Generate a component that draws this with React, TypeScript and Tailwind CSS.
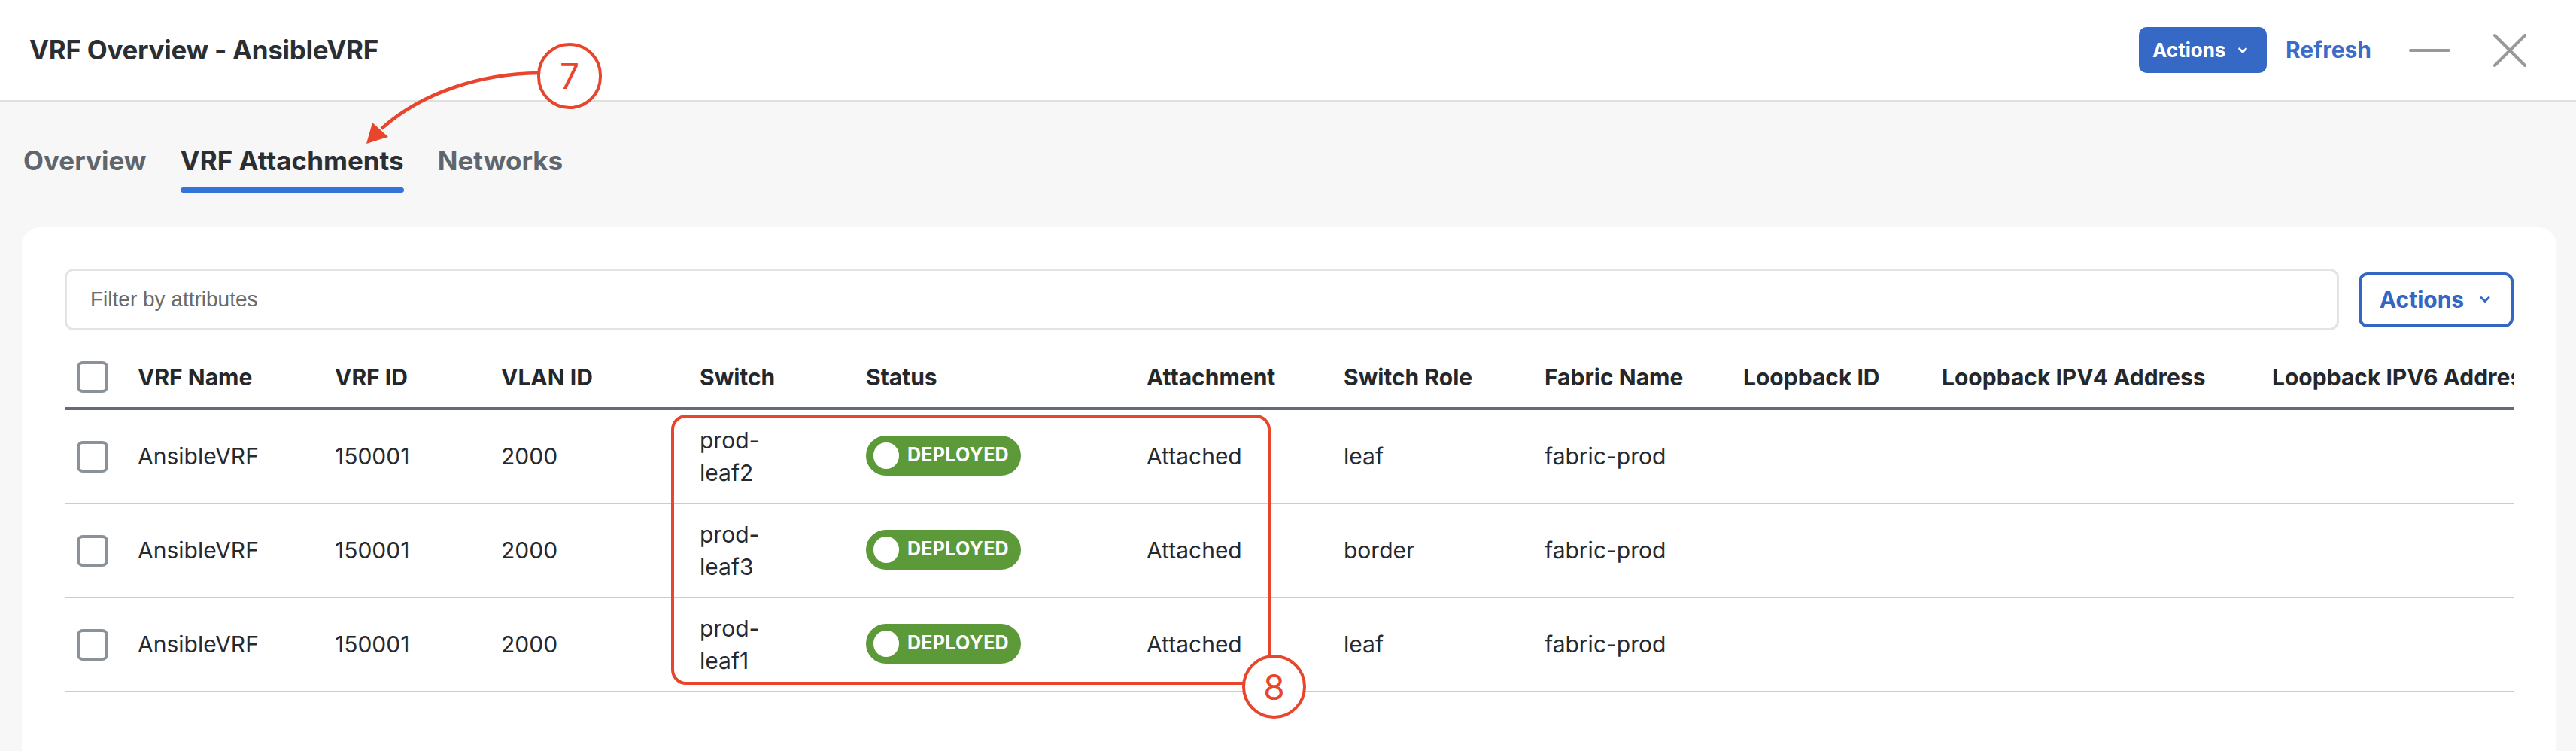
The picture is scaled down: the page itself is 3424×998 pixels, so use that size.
import { ChevronDown } from "lucide-react";

const COLS = [
  { label: "", w: "w-[97px]" },
  { label: "VRF Name", w: "w-[262px]" },
  { label: "VRF ID", w: "w-[221px]" },
  { label: "VLAN ID", w: "w-[264px]" },
  { label: "Switch", w: "w-[221px]" },
  { label: "Status", w: "w-[373px]" },
  { label: "Attachment", w: "w-[262px]" },
  { label: "Switch Role", w: "w-[267px]" },
  { label: "Fabric Name", w: "w-[264px]" },
  { label: "Loopback ID", w: "w-[264px]" },
  { label: "Loopback IPV4 Address", w: "w-[439px]" },
  { label: "Loopback IPV6 Address", w: "w-[500px]" },
];

const ROWS = [
  { sw: "prod-leaf2", role: "leaf" },
  { sw: "prod-leaf3", role: "border" },
  { sw: "prod-leaf1", role: "leaf" },
];

function Checkbox() {
  return <div className="ml-[16px] h-[42px] w-[42px] rounded-[8px] border-[4px] border-[#8b9199] bg-white" />;
}

function Deployed() {
  return (
    <span className="inline-flex h-[53px] items-center rounded-full bg-[#5c9a39] pl-[10px] pr-[16px]">
      <span className="h-[35px] w-[34px] rounded-full bg-white" />
      <span className="ml-[11px] text-[25px] font-bold tracking-[0.3px] text-white">DEPLOYED</span>
    </span>
  );
}

export default function App() {
  return (
    <div className="relative flex h-[998px] w-[3424px] flex-col overflow-hidden bg-[#f7f7f7] font-['Inter',sans-serif] text-[#2a2d32]">
      {/* header */}
      <div className="flex h-[135px] shrink-0 items-center border-b-2 border-[#dfdfdf] bg-white pl-[39px] pr-[66px]">
        <h1 className="text-[35px] font-bold tracking-[-0.3px] text-[#2b2e33]">VRF Overview - AnsibleVRF</h1>
        <div className="ml-auto flex items-center">
          <button className="flex h-[61px] w-[170px] items-center rounded-[10px] bg-[#3668c6] pl-[18px] text-[26px] font-bold text-white">
            Actions
            <ChevronDown className="ml-[14px] h-[18px] w-[18px]" strokeWidth={3.5} />
          </button>
          <button className="ml-[25px] text-[30px] font-bold text-[#3c6bc8]">Refresh</button>
          <div className="ml-[50px] h-[4px] w-[55px] rounded-full bg-[#999999]" />
          <svg className="ml-[57px]" width="44" height="44" viewBox="0 0 44 44">
            <path d="M2 2 L42 42 M42 2 L2 42" stroke="#999999" strokeWidth="4" strokeLinecap="round" />
          </svg>
        </div>
      </div>

      {/* tabs */}
      <div className="flex h-[167px] shrink-0 gap-[45px] pl-[31px] pt-[56px]">
        <div className="text-[35px] font-bold leading-[44px] text-[#5f666e]">Overview</div>
        <div className="flex flex-col">
          <div className="text-[35px] font-bold leading-[44px] text-[#2b2e33]">VRF Attachments</div>
          <div className="mt-[14px] h-[7px] rounded-full bg-[#3275d8]" />
        </div>
        <div className="text-[35px] font-bold leading-[44px] text-[#5f666e]">Networks</div>
      </div>

      {/* card */}
      <div className="ml-[29px] mr-[26px] flex-1 rounded-t-[24px] bg-white px-[57px] pt-[55px]">
        <div className="flex items-center gap-[26px]">
          <div className="flex h-[82px] flex-1 items-center rounded-[12px] border-[3px] border-[#e4e4e8] pl-[31px] font-['Liberation_Sans',sans-serif] text-[28px] text-[#6b6b6b]">
            Filter by attributes
          </div>
          <button className="flex h-[73px] w-[206px] items-center justify-center rounded-[12px] border-[4px] border-[#3466c4] text-[30px] font-bold text-[#3466c4]">
            Actions
            <ChevronDown className="ml-[18px] h-[20px] w-[20px]" strokeWidth={3.5} />
          </button>
        </div>

        <div className="mt-[22px] overflow-hidden">
          <div className="flex h-[84px] w-max items-center border-b-[4px] border-[#646b73]">
            {COLS.map((c, i) => (
              <div key={i} className={`${c.w} shrink-0 whitespace-nowrap text-[30px] font-bold text-[#24272b]`}>
                {i === 0 ? <Checkbox /> : c.label}
              </div>
            ))}
          </div>
          {ROWS.map((r) => (
            <div key={r.sw} className="flex h-[125px] w-max items-center border-b-2 border-[#cccccc] text-[30px] text-[#26292e]">
              <div className="w-[97px] shrink-0">
                <Checkbox />
              </div>
              <div className="w-[262px] shrink-0">AnsibleVRF</div>
              <div className="w-[221px] shrink-0">150001</div>
              <div className="w-[264px] shrink-0">2000</div>
              <div className="w-[221px] shrink-0">
                <div className="w-[110px] leading-[43px]">{r.sw}</div>
              </div>
              <div className="w-[373px] shrink-0">
                <Deployed />
              </div>
              <div className="w-[262px] shrink-0">Attached</div>
              <div className="w-[267px] shrink-0">{r.role}</div>
              <div className="w-[264px] shrink-0">fabric-prod</div>
              <div className="w-[264px] shrink-0" />
              <div className="w-[439px] shrink-0" />
              <div className="w-[500px] shrink-0" />
            </div>
          ))}
        </div>
      </div>

      {/* annotations */}
      <div className="pointer-events-none absolute left-[892px] top-[551px] h-[359px] w-[797px] rounded-[20px] border-[4px] border-[#e8452c]" />
      <svg className="pointer-events-none absolute left-0 top-0" width="3424" height="998">
        <path d="M716 97 C 640 98 562 122 507 171" fill="none" stroke="#e8452c" strokeWidth="4.5" />
        <polygon points="487,191 495,163 516,182" fill="#e8452c" />
      </svg>
      <div className="pointer-events-none absolute left-[714px] top-[57px] flex h-[88px] w-[86px] items-center justify-center rounded-full border-[4px] border-[#e8452c] bg-white text-[46px] leading-none text-[#e8452c]">
        7
      </div>
      <div className="pointer-events-none absolute left-[1651px] top-[870px] flex h-[85px] w-[85px] items-center justify-center rounded-full border-[4px] border-[#e8452c] bg-white text-[46px] leading-none text-[#e8452c]">
        8
      </div>
    </div>
  );
}
